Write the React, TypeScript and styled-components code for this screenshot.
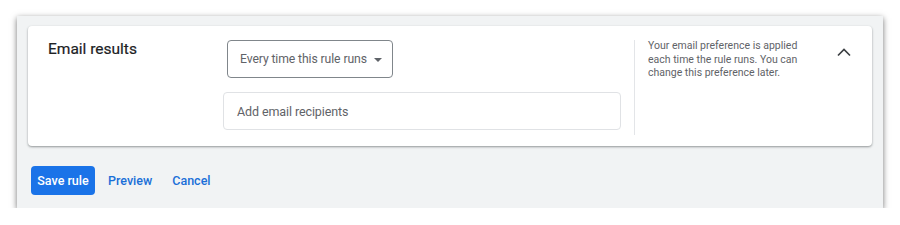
import { createGlobalStyle } from "styled-components";
import styled from "styled-components";

const GlobalStyle = createGlobalStyle`
  html, body {
    margin: 0;
    padding: 0;
    background: #ffffff;
    font-family: Roboto, "Noto Sans", Arial, sans-serif;
  }
`;

const SFrame = styled.div`
  margin: 16px 0 0 17px;
  width: 866px;
  height: 192px;
  box-sizing: border-box;
  background: #f1f3f4;
  box-shadow: 0 2px 6px rgba(0, 0, 0, 0.55);
  padding: 10px 11px 0 11px;
`;

const SCard = styled.div`
  height: 120px;
  box-sizing: border-box;
  background: #ffffff;
  border-radius: 4px;
  box-shadow: 0 1px 2px rgba(60, 64, 67, 0.4), 0 1px 3px rgba(60, 64, 67, 0.15);
  display: flex;
  padding: 14px 0 0 20px;
`;

const SLabel = styled.div`
  width: 175px;
  font-size: 15.5px;
  font-weight: 400;
  color: #202124;
  line-height: 18px;
  -webkit-text-stroke: 0.2px #202124;
`;

const SFields = styled.div`
  width: 398px;
  display: flex;
  flex-direction: column;
  gap: 14px;
`;

const SSelect = styled.div`
  margin-left: 4px;
  width: 166px;
  height: 38px;
  box-sizing: border-box;
  border: 1px solid #80868b;
  border-radius: 4px;
  display: flex;
  align-items: center;
  padding-left: 12px;
  gap: 7px;
  font-size: 12.2px;
  letter-spacing: -0.1px;
  white-space: nowrap;
  color: #5f6368;
`;

const SCaret = styled.span`
  width: 0;
  height: 0;
  border-left: 4px solid transparent;
  border-right: 4px solid transparent;
  border-top: 4px solid #5f6368;
  margin-top: 1px;
`;

const SInput = styled.div`
  height: 38px;
  box-sizing: border-box;
  border: 1px solid #e0e2e5;
  border-radius: 4px;
  display: flex;
  align-items: center;
  padding-left: 13px;
  font-size: 12.5px;
  letter-spacing: -0.1px;
  color: #5f6368;
`;

const SDivider = styled.div`
  width: 1px;
  height: 95px;
  background: #e3e5e8;
  margin-left: 13px;
`;

const SHelp = styled.p`
  margin: -1px 0 0 13px;
  width: 160px;
  font-size: 10.5px;
  line-height: 13.5px;
  color: #5f6368;
`;

const SToggle = styled.button`
  margin-left: 24px;
  margin-top: 2px;
  width: 24px;
  height: 20px;
  border: none;
  background: none;
  padding: 0;
  display: flex;
  align-items: center;
  justify-content: center;
  cursor: pointer;
`;

const SActions = styled.div`
  display: flex;
  align-items: center;
  margin-top: 20px;
  margin-left: 3px;
`;

const SButton = styled.button<{ $primary?: boolean }>`
  height: 29px;
  border: none;
  border-radius: 4px;
  font-family: inherit;
  font-size: 12.5px;
  font-weight: 500;
  cursor: pointer;
  width: ${(p) => (p.$primary ? "64px" : "auto")};
  padding: ${(p) => (p.$primary ? "0" : "0 10px")};
  margin-right: ${(p) => (p.$primary ? "3px" : "0")};
  background: ${(p) => (p.$primary ? "#1a73e8" : "transparent")};
  color: ${(p) => (p.$primary ? "#ffffff" : "#1a6fd8")};
`;

export default function App() {
  return (
    <>
      <GlobalStyle />
      <SFrame>
        <SCard>
          <SLabel>Email results</SLabel>
          <SFields>
            <SSelect>
              Every time this rule runs
              <SCaret />
            </SSelect>
            <SInput>Add email recipients</SInput>
          </SFields>
          <SDivider />
          <SHelp>
            Your email preference is applied each time the rule runs. You can
            change this preference later.
          </SHelp>
          <SToggle aria-label="Collapse">
            <svg width="16" height="10" viewBox="0 0 16 10">
              <path
                d="M2 8.5 L8 2.5 L14 8.5"
                fill="none"
                stroke="#3c4043"
                strokeWidth="1.7"
              />
            </svg>
          </SToggle>
        </SCard>
        <SActions>
          <SButton $primary>Save rule</SButton>
          <SButton>Preview</SButton>
          <SButton>Cancel</SButton>
        </SActions>
      </SFrame>
    </>
  );
}
